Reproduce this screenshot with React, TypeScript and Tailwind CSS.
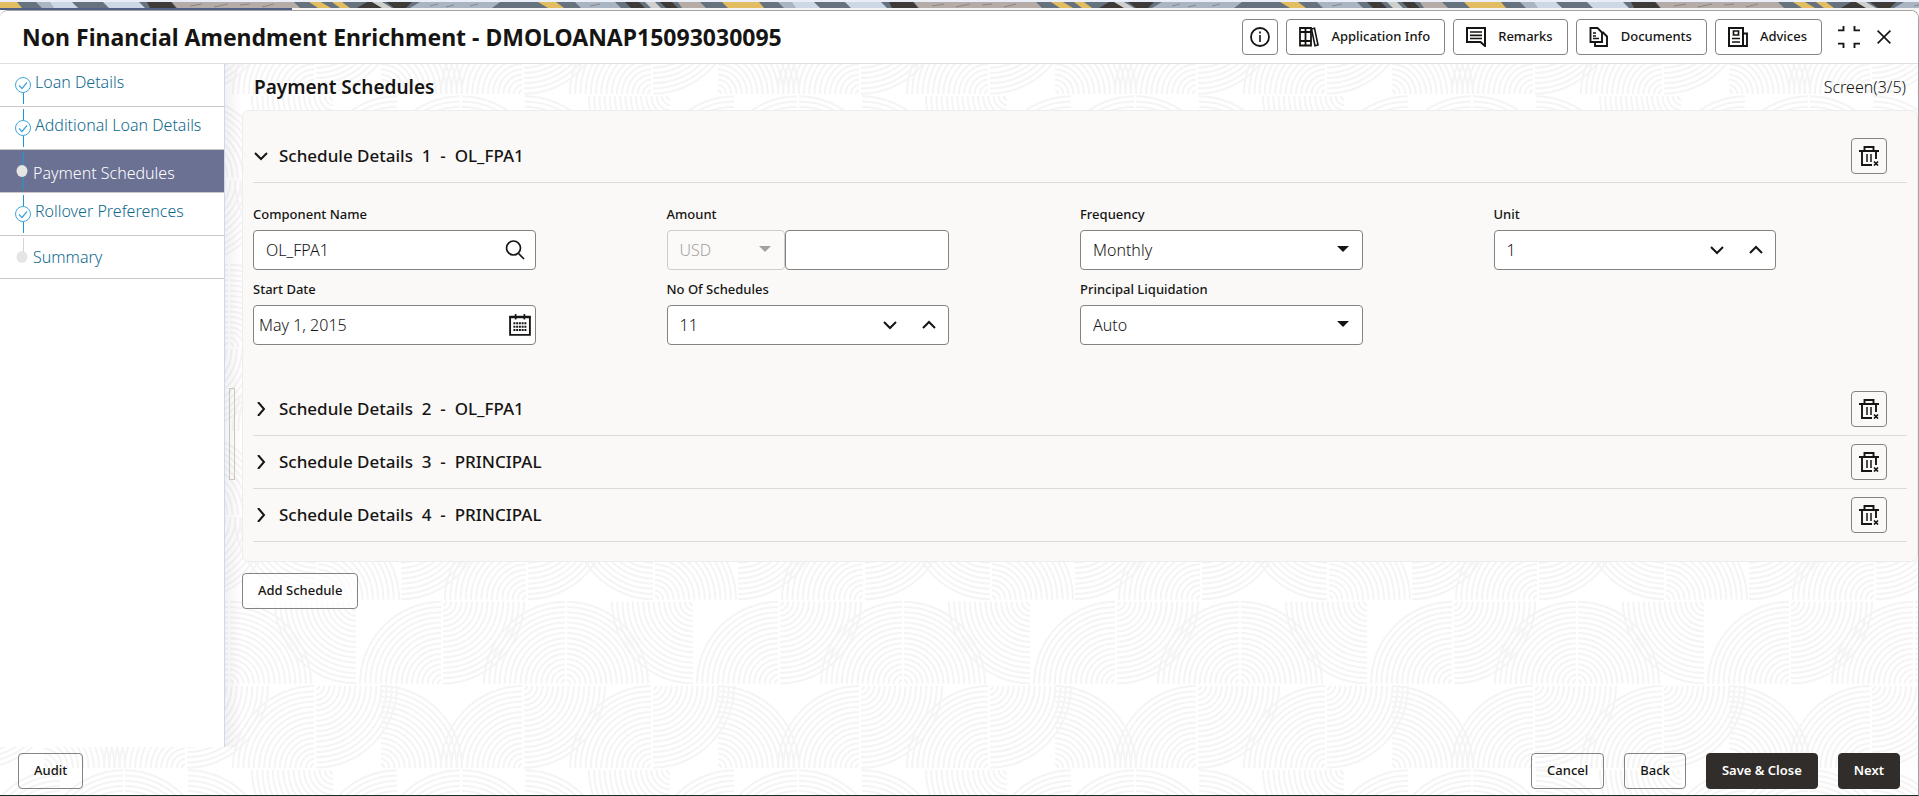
import type { ReactNode } from 'react';

type StepState = 'done' | 'current' | 'pending';

const steps: { label: string; state: StepState }[] = [
  { label: 'Loan Details', state: 'done' },
  { label: 'Additional Loan Details', state: 'done' },
  { label: 'Payment Schedules', state: 'current' },
  { label: 'Rollover Preferences', state: 'done' },
  { label: 'Summary', state: 'pending' },
];

const schedules = [
  { no: 1, component: 'OL_FPA1', open: true },
  { no: 2, component: 'OL_FPA1', open: false },
  { no: 3, component: 'PRINCIPAL', open: false },
  { no: 4, component: 'PRINCIPAL', open: false },
];

// Quarter fans of the wallpaper tile: centre x, row edge, horizontal and vertical direction
const TILE = 337;
const ROW = 84.25;
const fans: [number, number, number, number][] = [
  [334, 0, -1, 1],
  [61, 1, -1, -1],
  [124, 1, -1, -1],
  [124, 1, 1, -1],
  [187, 1, 1, -1],
  [317, 1, -1, 1],
  [317, 2, 1, -1],
  [63, 1, 1, 1],
  [190, 2, -1, -1],
  [190, 1, 1, 1],
  [229, 3, -1, -1],
  [229, 3, 1, -1],
  [20, 2, -1, 1],
  [105, 3, -1, -1],
  [105, 2, 1, 1],
  [315, 4, -1, -1],
  [315, 3, 1, 1],
  [43, 4, 1, -1],
  [186, 4, -1, -1],
  [186, 3, 1, 1],
];

function fanPath(cx: number, row: number, dx: number, dy: number) {
  const cy = row * ROW + dy;
  const sweep = dx * dy > 0 ? 1 : 0;
  let d = '';
  for (let r = 4; r <= 83; r += 5.2) {
    d += `M${cx + dx * r} ${cy}A${r} ${r} 0 0 ${sweep} ${cx + dx} ${cy + dy * r}`;
  }
  return d;
}

function Wallpaper() {
  return (
    <svg className="absolute inset-0 h-full w-full" aria-hidden="true">
      <defs>
        <pattern id="fans" width={TILE} height={TILE} patternUnits="userSpaceOnUse" y="84">
          <g fill="none" stroke="#f4f4f4" strokeWidth="2">
            {fans.map(([x, row, dx, dy], i) => (
              <g key={i}>
                <path d={fanPath(x, row, dx, dy)} />
                <path d={fanPath(x - TILE, row, dx, dy)} />
                <path d={fanPath(x + TILE, row, dx, dy)} />
              </g>
            ))}
          </g>
        </pattern>
      </defs>
      <rect width="100%" height="100%" fill="url(#fans)" />
    </svg>
  );
}

function TopStrip() {
  return (
    <svg className="block h-1.5 w-full" aria-hidden="true">
      <defs>
        <pattern id="strip" width="742" height="6" patternUnits="userSpaceOnUse">
          <rect width="742" height="6" fill="#66737e" />
          <path d="M0 0h17l5 6H0zM309 0h12l10 6h-13zM332 0h10l8 6h-10zM538 0h18l8 6h-16zM722 0h20v6h-14z" fill="#e3bd62" />
          <path d="M36 0h34l8 6H42zM410 6l10-6h80l-8 6zM575 0h40l6 6h-40z" fill="#aab5c4" />
          <path d="M50 0h22l6 6H54zM103 0h36l6 6h-36z" fill="#cdd8e6" />
          <path d="M147 0h24l5 6h-26zM357 6l10-6h8l8 6zM386 0h26l-6 6h-12zM625 0h14l6 6h-14zM660 0h12l6 6h-12z" fill="#3d3a38" />
          <path d="M172 0h122l6 6H177zM678 0h22l6 6h-24z" fill="#b5aca8" />
          <path d="M372 0h10l10 6h-10zM645 0h10l6 6h-10z" fill="#cfcfce" />
          <path d="M190 4l12-2M214 5l14-3M240 3l10-1M262 5l12-3M430 4l8-2M446 5l8-2M470 4l8-2M590 4l10-2" stroke="#8b8584" />
        </pattern>
      </defs>
      <rect width="100%" height="6" fill="url(#strip)" />
    </svg>
  );
}

function Icon({ children, className = 'h-5 w-5' }: { children: ReactNode; className?: string }) {
  return (
    <svg viewBox="0 0 20 20" className={className} fill="none" stroke="#161513" strokeWidth="1.7" aria-hidden="true">
      {children}
    </svg>
  );
}

const InfoIcon = () => (
  <Icon>
    <circle cx="10" cy="10" r="9" strokeWidth="1.8" />
    <path d="M10 8v7" strokeWidth="1.6" />
    <path d="M10 4.5v2" />
  </Icon>
);

const BinderIcon = () => (
  <Icon>
    <path d="M1 1h5.5v17.5H1zM6.5 1H12v17.5H6.5zM1 5h11M1 14h11" strokeWidth="1.8" />
    <path d="M12.500 2l3-.8L19 18l-3 .8z" strokeWidth="1.6" />
  </Icon>
);

const RemarksIcon = () => (
  <Icon>
    <path d="M1 1h18v18L14.500 15H1z" strokeWidth="2" />
    <path d="M4 5h12M4 8.300h12M4 11.500h12" />
  </Icon>
);

const DocumentsIcon = () => (
  <Icon>
    <path d="M1.500 1h7l4.500 4.500V15H1.500z" strokeWidth="1.900" />
    <path d="M4 6h3M4 9h3M4 11.500h6" />
    <path d="M13.500 5l4.500 4.500V19H6v-4" strokeWidth="1.900" />
  </Icon>
);

const AdvicesIcon = () => (
  <Icon>
    <path d="M1 1h14v18H1z" strokeWidth="2" />
    <path d="M15 6.500h4v12.500h-5" strokeWidth="1.900" />
    <path d="M5.500 4h5v4h-5zM4 11.500h8M4 15h8" />
  </Icon>
);

const TrashIcon = () => (
  <Icon>
    <path d="M0 5h20" strokeWidth="2" />
    <path d="M5.500 4.500V1h9v3.500M3 5.500v13.500h10M17 5.500V13" strokeWidth="1.900" />
    <path d="M8 8v8M12 8v8" strokeWidth="1.500" />
    <path d="M15 15.500l4 4M19 15.500l-4 4" />
  </Icon>
);

const SearchIcon = () => (
  <Icon>
    <circle cx="8.500" cy="8" r="7" strokeWidth="1.700" />
    <path d="M13.500 13.500l5.500 5.500" />
  </Icon>
);

const CalendarIcon = () => (
  <Icon className="h-[22px] w-[22px]">
    <path d="M1 2.500h18v16.500H1z" />
    <path d="M0.200 3.200h19.600M6 0v5M14 0v5" strokeWidth="1.500" />
    <path d="M4 8.500h12M4 11.500h12M4 14.500h12" strokeWidth="1.800" strokeDasharray="1.800 0.700" />
  </Icon>
);

const CollapseIcon = () => (
  <Icon className="h-[22px] w-[22px]">
    <path d="M5 0v4H0M15 0v4h5M5 20v-4H0M15 20v-4h5" />
  </Icon>
);

const CloseIcon = () => (
  <Icon className="h-4 w-4">
    <path d="M2 2l16 16M18 2L2 18" strokeWidth="2" />
  </Icon>
);

function Chevron({ dir }: { dir: 'up' | 'down' | 'right' }) {
  const paths = { up: 'M1 10l6-6 6 6', down: 'M1 4l6 6 6-6', right: 'M4 0l6 7-6 7' };
  return (
    <svg viewBox="0 0 14 14" className="h-3.5 w-3.5" fill="none" stroke="#161513" strokeWidth="2" aria-hidden="true">
      <path d={paths[dir]} />
    </svg>
  );
}

function Button({ icon, children, primary = false }: { icon?: ReactNode; children: ReactNode; primary?: boolean }) {
  return (
    <button
      type="button"
      className={`flex h-9 items-center gap-3 rounded-[4px] border text-[13px] whitespace-nowrap ${
        primary ? 'border-[#312d2a] bg-[#312d2a] font-semibold text-white' : 'border-[#85827f] font-medium'
      } ${icon ? 'pr-[14px] pl-3' : 'px-[15px]'}`}
    >
      {icon}
      {children}
    </button>
  );
}

function IconButton({ label, children }: { label: string; children: ReactNode }) {
  return (
    <button
      type="button"
      aria-label={label}
      className="flex h-9 w-9 items-center justify-center rounded-[4px] border border-[#85827f]"
    >
      {children}
    </button>
  );
}

function StepMarker({ state, first }: { state: StepState; first: boolean }) {
  return (
    <svg viewBox="0 0 20 42" className="h-[42px] w-5 shrink-0" fill="none" aria-hidden="true">
      {state === 'pending' && <path d="M10.500 2v14" stroke="#d4d4d4" />}
      {state === 'done' && !first && <path d="M10.500 2v11" stroke="#1b9ad2" />}
      {state === 'done' && <path d="M10.500 29v11" stroke="#1b9ad2" />}
      {state === 'done' && (
        <>
          <circle cx="10" cy="21" r="7.500" stroke="#3fa7dc" />
          <path d="M6 21.500l3 3 5-6" stroke="#3fa7dc" strokeWidth="1.200" />
        </>
      )}
      {state === 'current' && <path d="M10.500 2v38" stroke="#1b9ad2" />}
      {state !== 'done' && <ellipse cx="9" cy="21" rx="5.500" ry="6" fill="#e6e5e4" />}
    </svg>
  );
}

const stepStyle: Record<StepState, string> = {
  done: 'text-[#0f6a8e] pl-0.5 pb-1.5',
  current: 'text-white pt-1',
  pending: 'text-[#0f6a8e]',
};

function Sidebar() {
  return (
    <nav className="w-[225px] shrink-0 border-r border-[#cdd9e8] bg-white">
      <ol>
        {steps.map((step, i) => (
          <li
            key={step.label}
            className={`flex h-[43px] border-b border-[#c9c8c7] pl-[13px] ${step.state === 'current' ? 'bg-[#6b7193]' : ''}`}
          >
            <StepMarker state={step.state} first={i === 0} />
            <a href="#" className={`flex items-center text-[16px] font-light ${stepStyle[step.state]}`}>
              {step.label}
            </a>
          </li>
        ))}
      </ol>
    </nav>
  );
}

const fieldBox = 'flex h-10 w-full items-center rounded-[4px] border border-[#85827f] bg-white';
const fieldText = 'h-full w-full min-w-0 bg-transparent text-[16px] font-light outline-none';

function Field({ id, label, children }: { id: string; label: string; children: ReactNode }) {
  return (
    <div className="pr-[131px]">
      <label htmlFor={id} className="mb-1.5 block h-5 text-[13px] leading-5 font-medium">
        {label}
      </label>
      {children}
    </div>
  );
}

function SelectBox({ id, label, value, disabled = false }: { id: string; label?: string; value: string; disabled?: boolean }) {
  return (
    <div className={disabled ? 'relative h-10 w-[118px] shrink-0' : 'relative h-10'}>
      <select
        id={id}
        aria-label={label}
        disabled={disabled}
        defaultValue={value}
        className={`h-full w-full appearance-none rounded-[4px] border px-3 text-[16px] font-light ${
          disabled ? 'border-[#cfcdcb] bg-[#fbfaf9] text-[#a3a19f]' : 'border-[#85827f] bg-white'
        }`}
      >
        <option>{value}</option>
      </select>
      <svg
        viewBox="0 0 12 6"
        className={`pointer-events-none absolute top-4 right-3.5 h-1.5 w-3 ${disabled ? 'fill-[#a3a19f]' : 'fill-[#161513]'}`}
        aria-hidden="true"
      >
        <path d="M0 0h12L6 6z" />
      </svg>
    </div>
  );
}

function Spinner({ id, value }: { id: string; value: string }) {
  return (
    <div className={fieldBox}>
      <input id={id} defaultValue={value} className={`${fieldText} pl-3`} />
      <button type="button" aria-label="Decrease" className="flex h-full w-[39px] shrink-0 items-center justify-center">
        <Chevron dir="down" />
      </button>
      <button type="button" aria-label="Increase" className="flex h-full w-[39px] shrink-0 items-center justify-center">
        <Chevron dir="up" />
      </button>
    </div>
  );
}

function ScheduleForm() {
  return (
    <div className="grid grid-cols-4 gap-y-[9px] pt-[21px] pb-[38px]">
      <Field id="component" label="Component Name">
        <div className={fieldBox}>
          <input id="component" defaultValue="OL_FPA1" className={`${fieldText} pl-3`} />
          <button type="button" aria-label="Search component" className="mr-2.5 shrink-0">
            <SearchIcon />
          </button>
        </div>
      </Field>
      <Field id="amount" label="Amount">
        <div className="flex">
          <SelectBox id="currency" label="Currency" value="USD" disabled />
          <input id="amount" className={`${fieldBox} min-w-0 px-3 text-[16px] font-light outline-none`} />
        </div>
      </Field>
      <Field id="frequency" label="Frequency">
        <SelectBox id="frequency" value="Monthly" />
      </Field>
      <Field id="unit" label="Unit">
        <Spinner id="unit" value="1" />
      </Field>
      <Field id="start" label="Start Date">
        <div className={fieldBox}>
          <input id="start" defaultValue="May 1, 2015" className={`${fieldText} pl-[5px]`} />
          <button type="button" aria-label="Select date" className="mr-1 shrink-0">
            <CalendarIcon />
          </button>
        </div>
      </Field>
      <Field id="count" label="No Of Schedules">
        <Spinner id="count" value="11" />
      </Field>
      <Field id="liquidation" label="Principal Liquidation">
        <SelectBox id="liquidation" value="Auto" />
      </Field>
    </div>
  );
}

export default function App() {
  return (
    <div className="flex min-h-screen flex-col bg-white font-['Noto_Sans',sans-serif] text-[#161513]">
      <div className="h-0.5 bg-[#e9eef8]" />
      <TopStrip />
      <div className="h-0.5 bg-[#f4f3f2]">
        <div className="h-full w-[292px] bg-[#4f5f86]" />
      </div>

      <div className="relative flex flex-1 flex-col overflow-hidden rounded-t-lg border-t border-r border-b border-t-[#a5a3a1] border-r-[#a5a3a1] border-b-[#20292c]">
        <Wallpaper />

        <header className="relative flex h-[53px] items-center justify-between border-b border-[#e0dfde] bg-white pr-[26px] pl-[22px]">
          <h1 className="text-[23px] font-bold">Non Financial Amendment Enrichment - DMOLOANAP15093030095</h1>
          <div className="flex items-center gap-2">
            <IconButton label="Information">
              <InfoIcon />
            </IconButton>
            <Button icon={<BinderIcon />}>Application Info</Button>
            <Button icon={<RemarksIcon />}>Remarks</Button>
            <Button icon={<DocumentsIcon />}>Documents</Button>
            <Button icon={<AdvicesIcon />}>Advices</Button>
            <button type="button" aria-label="Collapse" className="ml-2">
              <CollapseIcon />
            </button>
            <button type="button" aria-label="Close" className="ml-2">
              <CloseIcon />
            </button>
          </div>
        </header>

        <div className="relative flex flex-1">
          <Sidebar />
          <div className="w-[17px] shrink-0 bg-gradient-to-r from-black/5 to-transparent pt-[324px] pl-1">
            <div className="h-[92px] w-1.5 border border-[#c9c7c5]" />
          </div>

          <main className="min-w-0 flex-1">
            <div className="flex h-[46px] items-center justify-between pr-3 pl-3">
              <h2 className="text-[19px] font-semibold">Payment Schedules</h2>
              <span className="text-[16px] font-light">Screen(3/5)</span>
            </div>

            <section className="rounded-md border border-[#efedeb] bg-[#faf9f8] px-2.5 pt-[19px] pb-[19px]">
              {schedules.map((s) => (
                <div key={s.no}>
                  <div className="flex h-[53px] items-center justify-between border-b border-[#dddbd9] pr-5">
                    <button type="button" aria-expanded={s.open} className="flex items-center gap-[11px] pl-px">
                      <Chevron dir={s.open ? 'down' : 'right'} />
                      <span className="text-[17px] font-medium whitespace-pre">{`Schedule Details  ${s.no}  -  ${s.component}`}</span>
                    </button>
                    <IconButton label={`Delete schedule ${s.no}`}>
                      <TrashIcon />
                    </IconButton>
                  </div>
                  {s.open && <ScheduleForm />}
                </div>
              ))}
            </section>

            <div className="mt-[11px] flex">
              <div className="rounded-[4px] bg-white/60">
                <Button>Add Schedule</Button>
              </div>
            </div>
          </main>
        </div>

        <footer className="relative flex h-12 items-center justify-between pr-[18px] pl-[18px]">
          <Button>Audit</Button>
          <div className="flex gap-5">
            <Button>Cancel</Button>
            <Button>Back</Button>
            <Button primary>Save &amp; Close</Button>
            <Button primary>Next</Button>
          </div>
        </footer>
      </div>
    </div>
  );
}
